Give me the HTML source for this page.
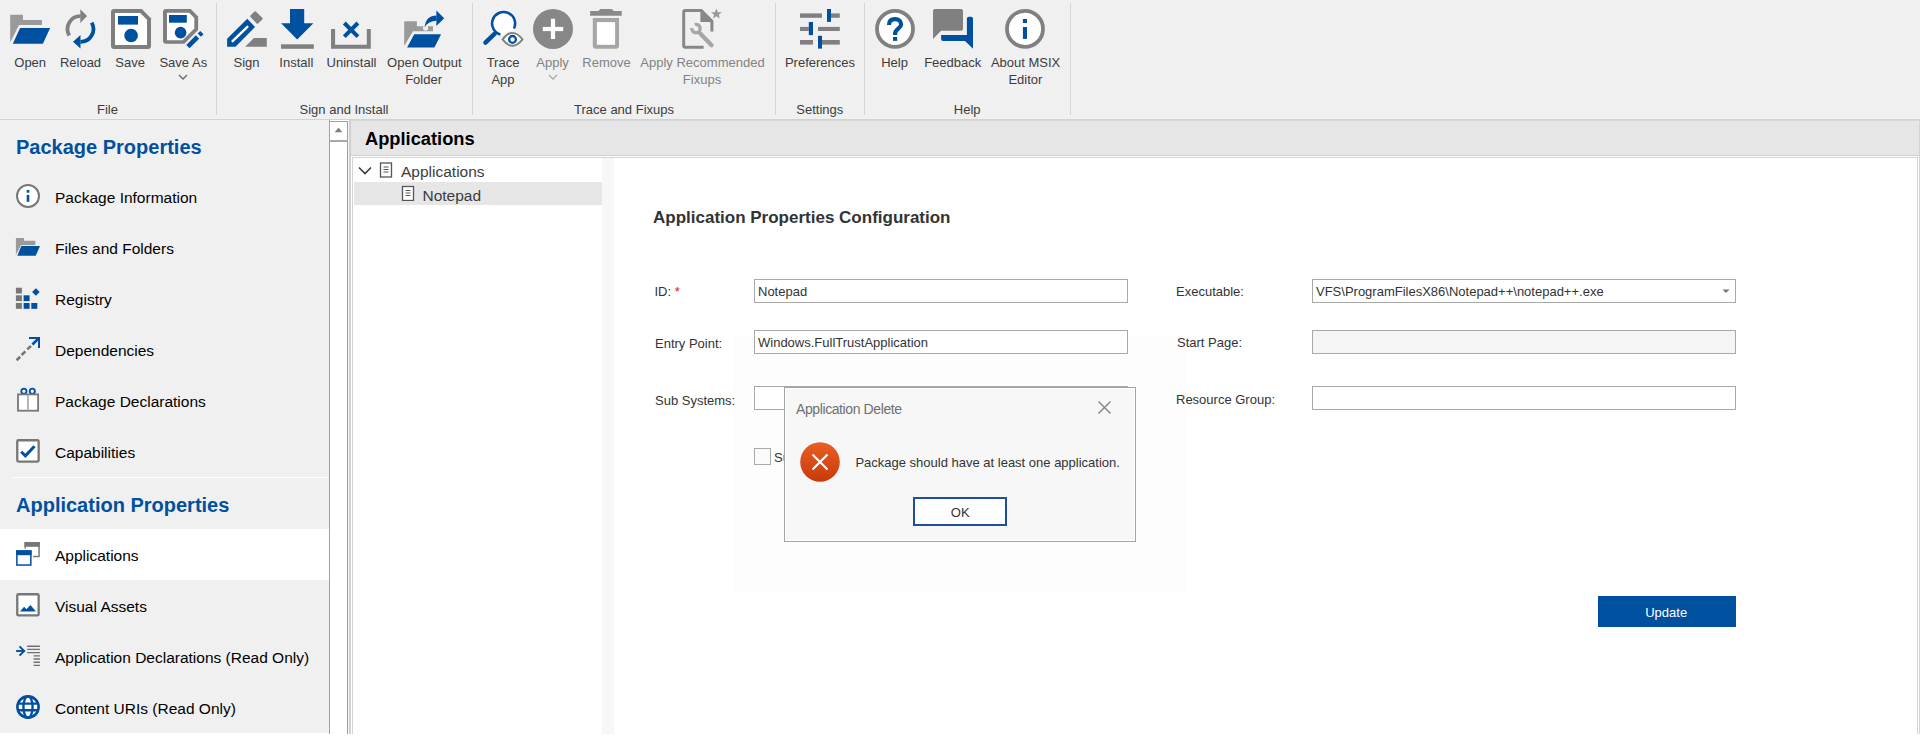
<!DOCTYPE html>
<html><head><meta charset="utf-8">
<style>
*{box-sizing:border-box;margin:0;padding:0}
html,body{width:1920px;height:742px;overflow:hidden;background:#fff;font-family:"Liberation Sans",sans-serif;position:relative}
.a{position:absolute}
.t{position:absolute;white-space:nowrap;line-height:1}
#ribbon{position:absolute;left:0;top:0;width:1920px;height:120px;background:#f0f0f0;border-bottom:1px solid #d2d2d2}
.sep{position:absolute;top:3px;width:1px;height:112px;background:#d6d6d6}
.rl{position:absolute;font-size:13px;color:#3c3c3c;text-align:center;white-space:nowrap;line-height:1;transform:translateX(-50%)}
.dis{color:#828282}
.ic{position:absolute;top:9px;width:40px;height:40px}
#side{position:absolute;left:0;top:120px;width:330px;height:613px;background:#f0f0f0;border-right:1px solid #a9a9a9}
.sh{position:absolute;left:16px;font-size:20px;font-weight:bold;color:#0050a0;white-space:nowrap;line-height:1}
.si{position:absolute;left:55px;font-size:15.5px;color:#000;white-space:nowrap;line-height:1}
.sic{position:absolute;left:16px;width:24px;height:24px}
.fl{font-size:13px;color:#333}
.fv{font-size:13px;color:#333}
.inp{position:absolute;border:1px solid #a9a9a9;background:#fff}
</style></head><body>

<div id="ribbon">

<svg class="a" style="left:0;top:0" width="1080" height="56" viewBox="0 0 1080 56">
<!-- Open -->
<path d="M10.2 15.4 Q10.2 14.7 10.9 14.7 H23 V19.9 H41.9 V25.1 H19 L10.2 42.5 Z" fill="#9a9a9a"/>
<path d="M20.1 28 H50.1 L42.9 43.8 H12.8 Z" fill="#0050a0" stroke="#f0f0f0" stroke-width="1.6" paint-order="stroke"/>
<!-- Reload -->
<path d="M69.3 35.5 A12.9 12.9 0 0 1 80.6 16.1" fill="none" stroke="#808080" stroke-width="3.8"/>
<path d="M80.3 9.2 L87.1 16.1 L80.3 23.1 Z" fill="#808080"/>
<path d="M91.7 22.6 A12.9 12.9 0 0 1 80.4 41.9" fill="none" stroke="#0050a0" stroke-width="3.8"/>
<path d="M80.5 35.1 L73 41.7 L80.5 48.4 Z" fill="#0050a0"/>
<!-- Save -->
<path d="M114 9 H141.8 L151 18.2 V46 Q151 49 148 49 H114 Q111 49 111 46 V12 Q111 9 114 9 Z" fill="#7f7f7f"/>
<path d="M115 13 H140.2 L147 19.8 V45 H115 Z" fill="#fff"/>
<rect x="118" y="16" width="20" height="8.6" fill="#0050a0"/>
<circle cx="131.1" cy="35.5" r="6.8" fill="#0050a0"/>
<!-- Save As -->
<path d="M166 9 H190.7 L198.1 16.6 V30 L184.3 43.8 H166 Q163 43.8 163 40.8 V12 Q163 9 166 9 Z" fill="#7f7f7f"/>
<path d="M167 12.8 H189.1 L194.3 18 V28.6 L182.6 40.3 H167 Z" fill="#fff"/>
<rect x="169" y="15" width="17.8" height="7.7" fill="#0050a0"/>
<circle cx="180.6" cy="32.6" r="5.8" fill="#0050a0"/>
<path d="M187.9 46.6 L197.5 37" stroke="#0050a0" stroke-width="4.6"/>
<path d="M199.3 35.2 L201.9 32.6" stroke="#0050a0" stroke-width="4.6"/>
<!-- Sign -->
<path d="M227.1 46.8 V38.7 L247.3 18.8 L255 26.9 L235.5 46.8 Z" fill="#0050a0"/>
<path d="M232.6 41.2 L247.4 26.8" stroke="#fff" stroke-width="2.4" stroke-linecap="round"/>
<path d="M255 12.4 L261.5 18.6 L257.4 22.7 L251.3 16.3 Z" fill="#808080" stroke="#808080" stroke-width="2.2" stroke-linejoin="round"/>
<path d="M245.2 46.8 L253.9 38 H266.8 V46.8 Z" fill="#808080"/>
<!-- Install -->
<path d="M290 9 H304.2 V23.2 H313.4 L297.2 39.4 L281.1 23.2 H290 Z" fill="#0050a0"/>
<rect x="281" y="44.3" width="32.8" height="4.5" fill="#808080"/>
<!-- Uninstall -->
<path d="M331 29.1 H335.1 V44.8 H366.8 V29.1 H370.8 V48.8 H331 Z" fill="#808080"/>
<path d="M344.3 23 L357.9 36.6 M357.9 23 L344.3 36.6" stroke="#0050a0" stroke-width="4"/>
<!-- Open Output Folder -->
<path d="M404.2 21.9 Q404.2 21.2 404.9 21.2 H416.9 V26.2 H433 V31.3 H413 L404.2 46.1 Z" fill="#9a9a9a"/>
<path d="M414.2 34.2 H441.1 L434.4 47.5 H407.1 Z" fill="#0050a0" stroke="#f0f0f0" stroke-width="1.6" paint-order="stroke"/>
<circle cx="425.6" cy="28" r="2.6" fill="#f0f0f0"/>
<path d="M424.6 27.6 Q425.6 15.8 436.6 15.6 V20.8 Q428.2 20.8 424.6 27.6 Z" fill="#0050a0"/>
<path d="M436.4 10.4 L444.2 18.2 L436.4 25.9 Z" fill="#0050a0"/>
<!-- Trace App -->
<path d="M485.4 42.7 L494.8 33.6" stroke="#0050a0" stroke-width="4.4" stroke-linecap="round"/>
<circle cx="503.6" cy="23.5" r="11.5" fill="#fff"/>
<path d="M500.4 34.55 A11.5 11.5 0 1 1 513.95 28.5" fill="none" stroke="#0050a0" stroke-width="2.6"/>
<path d="M499.3 39.4 Q506 30.8 512.5 30.8 Q519.5 30.8 525.6 39.4 Q519.5 48 512.5 48 Q506 48 499.3 39.4 Z" fill="#f0f0f0"/>
<path d="M502.6 39.4 Q507.5 32.9 512.5 32.9 Q517.5 32.9 522.5 39.4 Q517.5 45.8 512.5 45.8 Q507.5 45.8 502.6 39.4 Z" fill="#fff" stroke="#808080" stroke-width="1.9"/>
<circle cx="512.5" cy="39.4" r="3.4" fill="#fff" stroke="#0050a0" stroke-width="2.3"/>
<!-- Apply -->
<circle cx="553" cy="28.9" r="20" fill="#878787"/>
<rect x="542.8" y="26.9" width="20.4" height="4.2" fill="#fff"/>
<rect x="550.9" y="18.8" width="4.2" height="20.2" fill="#fff"/>
<!-- Remove -->
<path d="M590.1 11.1 H598.4 L600.4 8.9 H611.6 L613.9 11.1 H621.7 V15.8 H590.1 Z" fill="#898989"/>
<path d="M592.8 18 H619 V45.8 Q619 48.8 616 48.8 H595.8 Q592.8 48.8 592.8 45.8 Z" fill="#a6a6a6"/>
<rect x="596.9" y="22.1" width="18.2" height="22.7" fill="#fff"/>
<!-- Fixups -->
<path d="M685.2 9.05 H701.9 L713.4 20.5 V31.6 H710.4 V22 H700.4 V12.05 H685.2 V45.8 H703.6 V48.8 H685.2 Q682.2 48.8 682.2 45.8 V12.05 Q682.2 9.05 685.2 9.05 Z" fill="#888"/>
<path d="M716.4 8.6 L717.9 12.2 L721.7 12.3 L718.8 14.7 L719.8 18.4 L716.4 16.3 L713 18.4 L714 14.7 L711.1 12.3 L714.9 12.2 Z" fill="#999"/>
<path d="M700 33.2 L711.6 45.3" stroke="#a6a6a6" stroke-width="4.2" stroke-linecap="round"/>
<path d="M694.8 24.5 A4.2 4.2 0 1 1 691.8 28.1" fill="none" stroke="#a6a6a6" stroke-width="3.3"/>
<!-- Preferences -->
<rect x="800" y="13.4" width="22" height="4.4" fill="#808080"/><rect x="831" y="13.4" width="8.8" height="4.4" fill="#808080"/>
<rect x="827" y="9" width="4" height="12.9" fill="#0050a0"/>
<rect x="800" y="26.9" width="8.8" height="4.1" fill="#808080"/><rect x="818" y="26.9" width="21.8" height="4.1" fill="#808080"/>
<rect x="808.8" y="22" width="4.2" height="13.1" fill="#0050a0"/>
<rect x="800" y="40" width="13" height="4.6" fill="#808080"/><rect x="822" y="40" width="17.8" height="4.6" fill="#808080"/>
<rect x="818" y="35.8" width="4" height="12.8" fill="#0050a0"/>
<!-- Help -->
<circle cx="895" cy="28.9" r="18" fill="#fff" stroke="#808080" stroke-width="3.8"/>
<path d="M889 24.9 C889 20.6 891.8 19.2 895 19.2 C898.6 19.2 901.1 21.4 901.1 24.4 C901.1 28.2 895.1 29.2 895.1 33.6 V35" fill="none" stroke="#0050a0" stroke-width="4.2"/>
<rect x="893" y="37" width="4.2" height="3.9" fill="#0050a0"/>
<!-- Feedback -->
<path d="M935 9.05 H961 Q963 9.05 963 11.05 V28.8 Q963 30.8 961 30.8 H941.1 L933 38.9 V11.05 Q933 9.05 935 9.05 Z" fill="#808080"/>
<path d="M941.1 35 H966.9 V18.8 Q966.9 16.8 968.9 16.8 H971 Q973 16.8 973 18.8 V48.8 L965 40.9 H943.1 Q941.1 40.9 941.1 38.9 Z" fill="#0050a0" stroke="#f0f0f0" stroke-width="1.2" paint-order="stroke"/>
<!-- About -->
<circle cx="1025" cy="28.9" r="18" fill="#fff" stroke="#808080" stroke-width="3.8"/>
<rect x="1022.9" y="19" width="4.1" height="4" fill="#0050a0"/>
<rect x="1022.9" y="27" width="4.1" height="11.9" fill="#0050a0"/>
</svg>
<!-- dropdown chevrons -->
<svg class="a" style="left:178px;top:74px" width="10" height="7"><path d="M1 1 L5 5 L9 1" fill="none" stroke="#666" stroke-width="1.3"/></svg>
<svg class="a" style="left:548px;top:74px" width="10" height="7"><path d="M1 1 L5 5 L9 1" fill="none" stroke="#aaa" stroke-width="1.3"/></svg>
  <div class="sep" style="left:216px"></div>
  <div class="sep" style="left:472px"></div>
  <div class="sep" style="left:775px"></div>
  <div class="sep" style="left:864px"></div>
  <div class="sep" style="left:1070px"></div>

  <!-- labels -->
  <div class="rl" style="left:30.2px;top:56px">Open</div>
  <div class="rl" style="left:80.5px;top:56px">Reload</div>
  <div class="rl" style="left:130.2px;top:56px">Save</div>
  <div class="rl" style="left:183.3px;top:56px">Save As</div>
  <div class="rl" style="left:246.5px;top:56px">Sign</div>
  <div class="rl" style="left:296.3px;top:56px">Install</div>
  <div class="rl" style="left:351.5px;top:56px">Uninstall</div>
  <div class="rl" style="left:424.3px;top:56px">Open Output</div>
  <div class="rl" style="left:423.6px;top:73px">Folder</div>
  <div class="rl" style="left:503px;top:56px">Trace</div>
  <div class="rl" style="left:503px;top:73px">App</div>
  <div class="rl dis" style="left:552.6px;top:56px">Apply</div>
  <div class="rl dis" style="left:606.5px;top:56px">Remove</div>
  <div class="rl dis" style="left:702.5px;top:56px">Apply Recommended</div>
  <div class="rl dis" style="left:702px;top:73px">Fixups</div>
  <div class="rl" style="left:820px;top:56px">Preferences</div>
  <div class="rl" style="left:894.5px;top:56px">Help</div>
  <div class="rl" style="left:952.7px;top:56px">Feedback</div>
  <div class="rl" style="left:1025.6px;top:56px">About MSIX</div>
  <div class="rl" style="left:1025.4px;top:73px">Editor</div>

  <div class="rl" style="left:107.5px;top:103px">File</div>
  <div class="rl" style="left:344px;top:103px">Sign and Install</div>
  <div class="rl" style="left:624px;top:103px">Trace and Fixups</div>
  <div class="rl" style="left:819.8px;top:103px">Settings</div>
  <div class="rl" style="left:967.2px;top:103px">Help</div>
</div>

<div id="side">

<div class="a" style="left:0;top:409px;width:329px;height:51px;background:#fff"></div>
<div class="a" style="left:12px;top:357px;width:316px;height:1px;background:#fff"></div>
<svg class="a" style="left:0;top:0" width="330" height="734" viewBox="0 0 330 734">
<!-- info (abs y; side top = 120 so translate) -->
<g transform="translate(0,-120)">
<circle cx="28" cy="196" r="11" fill="#fff" stroke="#777" stroke-width="2"/>
<rect x="26.7" y="190" width="2.6" height="2.7" fill="#0050a0"/>
<rect x="26.7" y="194.9" width="2.6" height="6.9" fill="#0050a0"/>
<!-- files -->
<path d="M15.9 238.1 H24 V240.8 H35.3 V245.2 H21 L15.9 254.8 Z" fill="#9a9a9a"/>
<path d="M21.3 246 H40 L35.7 255.7 H17.3 Z" fill="#0050a0" stroke="#f0f0f0" stroke-width="1" paint-order="stroke"/>
<!-- registry -->
<rect x="15.9" y="287.7" width="6" height="5.8" fill="#777"/>
<rect x="15.9" y="295.3" width="6" height="5.8" fill="#777"/>
<rect x="15.9" y="303" width="6" height="5.8" fill="#777"/>
<rect x="23.6" y="295.3" width="6" height="5.8" fill="#0050a0"/>
<rect x="23.6" y="303" width="6" height="5.8" fill="#0050a0"/>
<rect x="31.3" y="303" width="6" height="5.8" fill="#0050a0"/>
<path d="M35.9 288.2 L39.7 292 L35.9 295.8 L32.1 292 Z" fill="#0050a0"/>
<!-- dependencies -->
<path d="M29 338 H39 V347.9" fill="none" stroke="#0050a0" stroke-width="2"/>
<path d="M39 338 L32.4 344.5" stroke="#0050a0" stroke-width="2.5"/>
<path d="M31 345.9 L27.3 349.4 M25.4 351.4 L21.6 355 M20.2 356.8 L16.6 360.2" stroke="#777" stroke-width="2.6"/>
<!-- gift -->
<circle cx="23.9" cy="391.3" r="2.6" fill="none" stroke="#0050a0" stroke-width="1.8"/>
<circle cx="32.3" cy="391.3" r="2.6" fill="none" stroke="#0050a0" stroke-width="1.8"/>
<rect x="18" y="394.4" width="20.1" height="16.3" fill="#fff" stroke="#777" stroke-width="1.8"/>
<rect x="27.1" y="395" width="1.7" height="15.5" fill="#aaa"/>
<!-- capabilities -->
<rect x="17.25" y="440.25" width="21.4" height="21.3" rx="1.2" fill="#fff" stroke="#777" stroke-width="2.3"/>
<path d="M21.2 451.7 L25.4 455.8 L34.5 446.3" fill="none" stroke="#0050a0" stroke-width="3"/>
<!-- applications -->
<path d="M25.25 548.6 V542.8 H39.05 V556.45 H33.1" fill="none" stroke="#777" stroke-width="1.5"/>
<rect x="24.5" y="542.1" width="15.3" height="4.7" fill="#777"/>
<rect x="16.85" y="551.05" width="14" height="14" fill="#fff" stroke="#0050a0" stroke-width="1.5"/>
<rect x="16.1" y="550.3" width="15.5" height="4.9" fill="#0050a0"/>
<!-- visual assets -->
<rect x="17.25" y="594.25" width="21.4" height="21.2" rx="1.2" fill="#fff" stroke="#777" stroke-width="2.3"/>
<path d="M20 611.6 L24.1 606.7 L26.4 609.3 L30.5 605 L35.9 611.6 Z" fill="#0050a0"/>
<!-- app declarations -->
<path d="M16.1 651 H24.5" stroke="#0050a0" stroke-width="1.9"/>
<path d="M19.5 646.3 L24.2 651 L19.5 655.7" fill="none" stroke="#0050a0" stroke-width="1.9"/>
<path d="M27.1 646.3 H39.9 M27.1 649.4 H39.9 M27.1 652.6 H39.9 M33.6 655.9 H39.9 M33.6 659 H39.9 M33.6 662.2 H39.9 M33.6 665.4 H39.9" stroke="#707070" stroke-width="1.4"/>
<!-- globe -->
<circle cx="28" cy="707" r="10.6" fill="#fff" stroke="#0050a0" stroke-width="2.6"/>
<path d="M17 703.6 H39 M17 710.3 H39" stroke="#0050a0" stroke-width="2.4"/>
<ellipse cx="28" cy="707" rx="4.6" ry="10.8" fill="none" stroke="#0050a0" stroke-width="2.4"/>
</g>
</svg>
  <div class="sh" style="top:17px">Package Properties</div>
  <div class="si" style="top:70px">Package Information</div>
  <div class="si" style="top:121px">Files and Folders</div>
  <div class="si" style="top:172px">Registry</div>
  <div class="si" style="top:223px">Dependencies</div>
  <div class="si" style="top:274px">Package Declarations</div>
  <div class="si" style="top:325px">Capabilities</div>
  <div class="sh" style="top:375px">Application Properties</div>
  <div class="si" style="top:428px">Applications</div>
  <div class="si" style="top:479px">Visual Assets</div>
  <div class="si" style="top:530px">Application Declarations (Read Only)</div>
  <div class="si" style="top:581px">Content URIs (Read Only)</div>
</div>


<!-- scrollbar -->
<div class="a" style="left:329px;top:121px;width:19px;height:613px;background:#fff;border:1px solid #a0a0a0;border-bottom:none"></div>
<div class="a" style="left:329px;top:140px;width:19px;height:2px;background:#a8a8a8"></div>
<svg class="a" style="left:334px;top:127px" width="9" height="6"><path d="M0.7 5.2 L4.5 0.5 L8.3 5.2 Z" fill="#808080"/></svg>
<div class="a" style="left:348px;top:120px;width:1px;height:614px;background:#f6f6f6"></div>

<!-- content container -->
<div class="a" style="left:349px;top:120px;width:1571px;height:614px;border-left:2px solid #d0d0d0;border-right:1px solid #d4d4d4;border-top:1px solid #d8d8d8;background:#fff"></div>
<div class="a" style="left:351px;top:121px;width:1568px;height:34px;background:#e6e6e6"></div>
<div class="a" style="left:351px;top:155px;width:1568px;height:1px;background:#d0d0d0"></div>
<div class="t" style="left:365px;top:129.5px;font-size:18.3px;font-weight:bold;color:#000">Applications</div>
<!-- panel -->
<div class="a" style="left:352px;top:157px;width:1566px;height:577px;border:1px solid #d4d4d4;border-bottom:none;background:#fff"></div>
<div class="a" style="left:602px;top:158px;width:12px;height:576px;background:#f7f7f7"></div>
<!-- tree -->
<div class="a" style="left:354px;top:182px;width:248px;height:23px;background:#e6e6e6"></div>
<svg class="a" style="left:358px;top:166px" width="14" height="10"><path d="M1 1.5 L7 7.5 L13 1.5" fill="none" stroke="#3a3a3a" stroke-width="1.6"/></svg>
<svg class="a" style="left:379px;top:162px" width="14" height="16"><rect x="1.5" y="1" width="11" height="14" fill="#fff" stroke="#555" stroke-width="1.3"/><path d="M4.5 5h5M4.5 7.5h5M4.5 10h5" stroke="#555" stroke-width="1"/></svg>
<svg class="a" style="left:401px;top:185px" width="14" height="16"><rect x="1.5" y="1.5" width="11" height="14" fill="#fff" stroke="#555" stroke-width="1.3"/><path d="M4.5 5.5h5M4.5 8h5M4.5 10.5h5" stroke="#555" stroke-width="1"/></svg>
<div class="t" style="left:401px;top:164.4px;font-size:15.5px;color:#3c3c3c">Applications</div>
<div class="t" style="left:422.5px;top:187.9px;font-size:15.5px;color:#3c3c3c">Notepad</div>

<!-- form -->
<div class="a" style="left:734px;top:337px;width:452px;height:255px;background:#fdfdfd"></div>
<div class="t" style="left:653px;top:208.7px;font-size:17px;font-weight:bold;color:#333">Application Properties Configuration</div>
<div class="t fl" style="left:654.5px;top:285px">ID: <span style="color:#e01010">*</span></div>
<div class="t fl" style="left:655px;top:336.6px">Entry Point:</div>
<div class="t fl" style="left:655px;top:393.8px">Sub Systems:</div>
<div class="inp" style="left:754px;top:279px;width:374px;height:24px"></div>
<div class="t fv" style="left:758px;top:285px">Notepad</div>
<div class="inp" style="left:754px;top:330px;width:374px;height:24px"></div>
<div class="t fv" style="left:758px;top:336.4px">Windows.FullTrustApplication</div>
<div class="inp" style="left:754px;top:386px;width:374px;height:24px"></div>
<div class="a" style="left:754px;top:448px;width:17px;height:17px;border:1px solid #aaa;background:#fafafa"></div>
<div class="t fl" style="left:774px;top:451px">Su</div>

<div class="t fl" style="left:1176px;top:285.3px">Executable:</div>
<div class="t fl" style="left:1177px;top:336.2px">Start Page:</div>
<div class="t fl" style="left:1176px;top:393px">Resource Group:</div>
<div class="inp" style="left:1312px;top:279px;width:424px;height:24px"></div>
<div class="t fv" style="left:1316px;top:285px">VFS\ProgramFilesX86\Notepad++\notepad++.exe</div>
<svg class="a" style="left:1722px;top:289px" width="8" height="5"><path d="M0.5 0.5 L7.5 0.5 L4 4 Z" fill="#777"/></svg>
<div class="inp" style="left:1312px;top:330px;width:424px;height:24px;background:#f5f5f5"></div>
<div class="inp" style="left:1312px;top:386px;width:424px;height:24px"></div>

<div class="a" style="left:1598px;top:596px;width:138px;height:31px;background:#0050a0"></div>
<div class="t" style="left:1666.2px;top:605.6px;font-size:13px;color:#fff;transform:translateX(-50%)">Update</div>

<!-- dialog -->
<div class="a" style="left:784px;top:387px;width:352px;height:155px;background:#f7f7f7;border:1px solid #a4a4a4;box-shadow:inset 0 0 0 1px #fff;z-index:2"></div>
<div class="t" style="left:796px;top:401.6px;font-size:14px;letter-spacing:-0.4px;color:#707070;z-index:3">Application Delete</div>
<svg class="a" style="left:1097px;top:400px;z-index:3" width="15" height="15"><path d="M1.5 1.5 L13.5 13.5 M13.5 1.5 L1.5 13.5" stroke="#8a8a8a" stroke-width="1.5"/></svg>
<svg class="a" style="left:800px;top:442px;z-index:3" width="40" height="40"><defs><linearGradient id="eg" x1="0" y1="0" x2="0" y2="1"><stop offset="0" stop-color="#ea5f24"/><stop offset="1" stop-color="#c8390a"/></linearGradient></defs><circle cx="20" cy="20" r="19.8" fill="url(#eg)"/><path d="M12.5 12.5 L27.5 27.5 M27.5 12.5 L12.5 27.5" stroke="#fff" stroke-width="2.2"/></svg>
<div class="t" style="left:855.4px;top:456.3px;font-size:13px;color:#333;z-index:3">Package should have at least one application.</div>
<div class="a" style="left:913px;top:497px;width:94px;height:29px;border:2px solid #1f4f9c;background:#fff;z-index:3"></div>
<div class="t" style="left:960.2px;top:506px;font-size:13px;color:#333;transform:translateX(-50%);z-index:4">OK</div>

</body></html>
